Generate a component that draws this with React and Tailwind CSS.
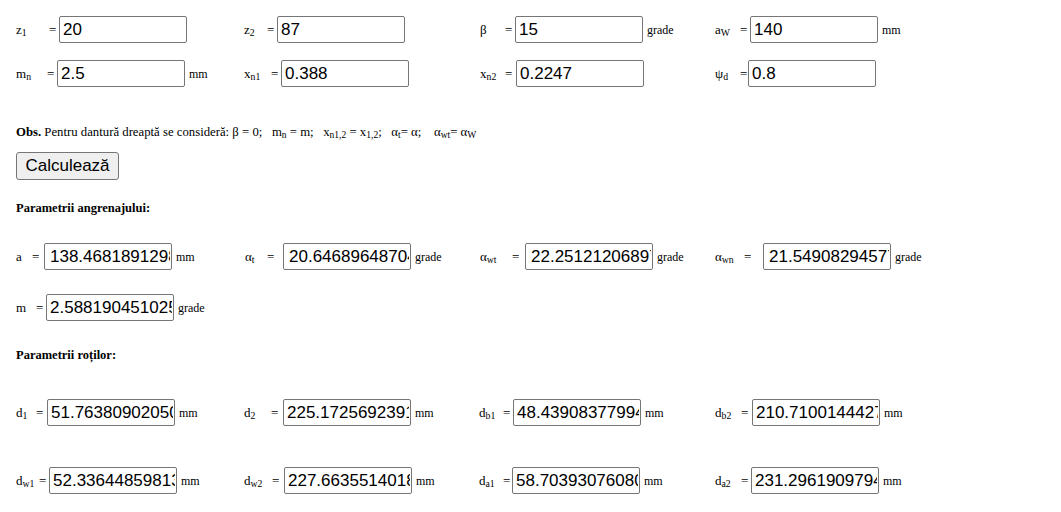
import React from "react";

const serif = "font-['Liberation_Serif','Times_New_Roman',serif]";

// one "label = [input] unit" cell; widths read off the old table layout
function Field({ label, lw, ew, value, unit, w, pl = "pl-[3px]" }) {
  return (
    <div className={`flex items-center ${w}`}>
      <span className={`${lw} text-[13px] text-black`}>{label}</span>
      <span className={`${ew} text-[13px] text-black`}>=</span>
      <input
        readOnly
        value={value}
        className={`h-[27px] w-[128px] rounded-[2px] border border-[#767676] bg-white ${pl} pr-[1px] font-['Liberation_Sans',Arial,sans-serif] text-[17px] text-black outline-none`}
      />
      {unit && <span className="ml-[4px] text-[12px] text-black">{unit}</span>}
    </div>
  );
}

const S = ({ c }) => <sub>{c}</sub>;

export default function App() {
  return (
    <div className={`${serif} h-[512px] w-[1061px] bg-white pl-4 text-black`}>
      {/* input data */}
      <div className="flex pt-[16px]">
        <Field w="w-[228px]" lw="w-[33px]" ew="w-[10px]" label={<>z<S c="1" /></>} value="20" />
        <Field w="w-[236px]" lw="w-[23px]" ew="w-[10px]" label={<>z<S c="2" /></>} value="87" />
        <Field w="w-[235px]" lw="w-[25px]" ew="w-[10px]" label="β" value="15" unit="grade" />
        <Field lw="w-[25px]" ew="w-[10px]" label={<>a<S c="W" /></>} value="140" unit="mm" />
      </div>
      <div className="mt-[17px] flex">
        <Field w="w-[228px]" lw="w-[31px]" ew="w-[10px]" label={<>m<S c="n" /></>} value="2.5" unit="mm" />
        <Field w="w-[236px]" lw="w-[27px]" ew="w-[10px]" label={<>x<S c="n1" /></>} value="0.388" />
        <Field w="w-[235px]" lw="w-[25px]" ew="w-[11px]" label={<>x<S c="n2" /></>} value="0.2247" />
        <Field lw="w-[25px]" ew="w-[8px]" label={<>ψ<S c="d" /></>} value="0.8" />
      </div>

      <p className="mt-[38px] whitespace-pre text-[12.75px] leading-[15px]">
        <b>Obs.</b> Pentru dantură dreaptă se consideră: β = 0;   m<sub>n</sub> = m;   x<sub>n1,2</sub> = x<sub>1,2</sub>;   α<sub>t</sub>= α;    α<sub>wt</sub>= α<sub>W</sub>
      </p>

      <button className="mt-[12px] h-[28px] w-[103px] rounded-[3px] border border-[#767676] bg-[#efefef] font-['Liberation_Sans',Arial,sans-serif] text-[17px] text-black">
        Calculează
      </button>

      <p className="mt-[21px] text-[12.5px] font-bold leading-[15px]">Parametrii angrenajului:</p>

      {/* results: gearing */}
      <div className="mt-[27px] flex">
        <Field w="w-[229px]" lw="w-[16px]" ew="w-[12px]" pl="pl-[5px]" label="a" value="138.46818912982483" unit="mm" />
        <Field w="w-[235px]" lw="w-[22px]" ew="w-[16px]" pl="pl-[5px]" label={<>α<S c="t" /></>} value="20.64689648704115" unit="grade" />
        <Field w="w-[235px]" lw="w-[32px]" ew="w-[13px]" pl="pl-[5px]" label={<>α<S c="wt" /></>} value="22.25121206897331" unit="grade" />
        <Field lw="w-[29px]" ew="w-[19px]" pl="pl-[5px]" label={<>α<S c="wn" /></>} value="21.54908294577215" unit="grade" />
      </div>
      <div className="mt-[24px] flex">
        <Field lw="w-[20px]" ew="w-[10px]" label="m" value="2.588190451025908" unit="grade" />
      </div>

      <p className="mt-[27px] text-[12.5px] font-bold leading-[15px]">Parametrii roților:</p>

      {/* results: wheels */}
      <div className="mt-[36px] flex">
        <Field w="w-[228px]" lw="w-[20px]" ew="w-[11px]" label={<>d<S c="1" /></>} value="51.76380902050415" unit="mm" />
        <Field w="w-[235px]" lw="w-[27px]" ew="w-[12px]" label={<>d<S c="2" /></>} value="225.17256923919305" unit="mm" />
        <Field w="w-[236px]" lw="w-[24px]" ew="w-[10px]" label={<>d<S c="b1" /></>} value="48.43908377994173" unit="mm" />
        <Field lw="w-[26px]" ew="w-[11px]" label={<>d<S c="b2" /></>} value="210.71001444271256" unit="mm" />
      </div>
      <div className="mt-[41px] flex">
        <Field w="w-[228px]" lw="w-[23px]" ew="w-[10px]" label={<>d<S c="w1" /></>} value="52.33644859813084" unit="mm" />
        <Field w="w-[235px]" lw="w-[28px]" ew="w-[12px]" label={<>d<S c="w2" /></>} value="227.66355140186917" unit="mm" />
        <Field w="w-[236px]" lw="w-[24px]" ew="w-[9px]" label={<>d<S c="a1" /></>} value="58.70393076080466" unit="mm" />
        <Field lw="w-[26px]" ew="w-[10px]" label={<>d<S c="a2" /></>} value="231.29619097944183" unit="mm" />
      </div>
    </div>
  );
}
